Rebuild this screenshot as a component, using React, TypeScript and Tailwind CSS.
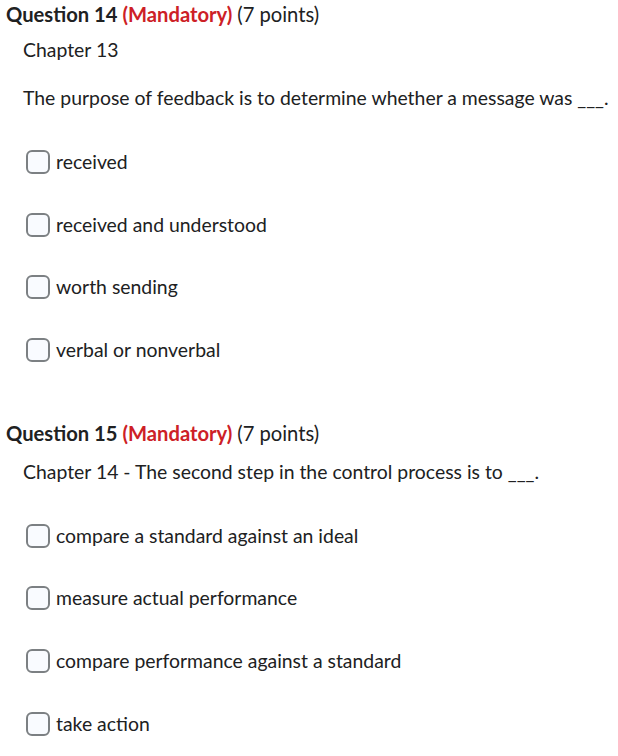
import React from "react";

type Q = {
  num: number;
  points: number;
  chapter: string;
  prompt?: string;
  options: string[];
};

const questions: Q[] = [
  {
    num: 14,
    points: 7,
    chapter: "Chapter 13",
    prompt: "The purpose of feedback is to determine whether a message was ___.",
    options: ["received", "received and understood", "worth sending", "verbal or nonverbal"],
  },
  {
    num: 15,
    points: 7,
    chapter: "Chapter 14 - The second step in the control process is to ___.",
    options: [
      "compare a standard against an ideal",
      "measure actual performance",
      "compare performance against a standard",
      "take action",
    ],
  },
];

function Option({ label }: { label: string }) {
  return (
    <label className="flex items-center h-7 pl-[26px]">
      <span className="w-6 h-6 rounded-[6px] border-2 border-[#7c8083] bg-[#f9fbff] shrink-0" />
      <span className="ml-[6px]">{label}</span>
    </label>
  );
}

export default function App() {
  return (
    <div
      className="bg-white text-[#202122] text-[19.4px] leading-7 w-[618px] h-[756px] overflow-hidden"
      style={{ fontFamily: "Lato, 'Open Sans', sans-serif" }}
    >
      {questions.map((q, i) => (
        <section key={q.num} className={i === 0 ? "" : "mt-[55px]"}>
          <h2 className="pl-[6px] font-bold text-[20.2px]">
            Question {q.num} <span className="text-[#cd2026]">(Mandatory)</span>{" "}
            <span className="font-normal">({q.points} points)</span>
          </h2>
          <div className={`pl-[23px] ${i === 0 ? "mt-2" : "mt-[11px]"}`}>{q.chapter}</div>
          {q.prompt && <div className="pl-[23px] mt-5">{q.prompt}</div>}
          <div className="mt-9 flex flex-col gap-[34.6px]">
            {q.options.map((o) => (
              <Option key={o} label={o} />
            ))}
          </div>
        </section>
      ))}
    </div>
  );
}
